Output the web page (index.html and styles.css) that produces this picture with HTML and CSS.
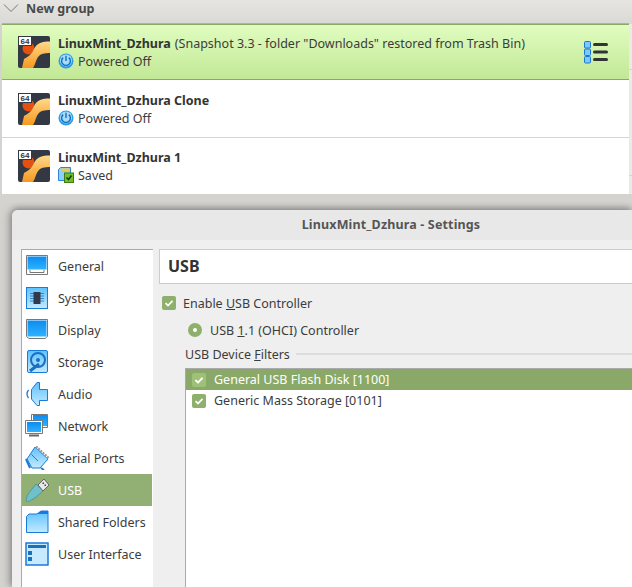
FILE: index.html
```html
<!DOCTYPE html>
<html lang="en">
<head>
<meta charset="utf-8">
<title>LinuxMint_Dzhura - Settings</title>
<link rel="stylesheet" href="styles.css">
</head>
<body>
<svg class="defs" aria-hidden="true">
  <defs>
    <linearGradient id="blue" x1="0" y1="0" x2="0" y2="1"><stop offset="0" stop-color="#0c8cf0"/><stop offset="1" stop-color="#2fb2ff"/></linearGradient>
    <linearGradient id="pale" x1="0" y1="0" x2="0" y2="1"><stop offset="0" stop-color="#5cc2ff"/><stop offset="1" stop-color="#c4eaff"/></linearGradient>
    <linearGradient id="orange" x1="0" y1="0" x2="0" y2="1"><stop offset="0" stop-color="#ffd98a"/><stop offset="1" stop-color="#f7981e"/></linearGradient>
    <symbol id="vm" viewBox="0 0 32 32">
      <rect width="32" height="32" rx="2" fill="#323844"/>
      <circle cx="10.500" cy="12.500" r="6" fill="#e3500f"/>
      <path d="M32 5.500C24 5.500 19 7 16 13C14 18 10 21 6 23L4 32H15C18 28 18 20 24 18C27 17 30 17 32 17Z" fill="url(#orange)"/>
      <rect x="0.500" y="0.500" width="13" height="9" fill="#fff" stroke="#323844"/>
      <text x="7" y="8" text-anchor="middle" class="bits">64</text>
    </symbol>
    <symbol id="power" viewBox="0 0 16 16">
      <circle cx="8" cy="8" r="7.500" fill="#2c9be8"/>
      <circle cx="8" cy="7.500" r="6" fill="#a9dcfb"/>
      <path d="M5.200 4.600A4.400 4.400 0 1 0 10.800 4.600" fill="none" stroke="#0f6fc0" stroke-width="1.400"/>
      <path d="M8 2.800V8" stroke="#0f6fc0" stroke-width="1.400"/>
    </symbol>
    <symbol id="check" viewBox="0 0 14 14">
      <rect width="14" height="14" rx="2" fill="#8fb06c"/>
      <path d="M3.500 7.200L6 9.500L10.500 4.800" fill="none" stroke="#fff" stroke-width="1.700"/>
    </symbol>
  </defs>
</svg>

<header class="group-head">
  <svg class="chevron" viewBox="0 0 16 10"><path d="M1 1.500L8 8.500L15 1.500" fill="none" stroke="#777" stroke-width="1"/></svg>
  <span class="group-name">New group</span>
</header>

<div class="vm-area">
  <section class="vm-list">
    <article class="vm vm-current">
      <svg class="vm-icon"><use href="#vm"/></svg>
      <div class="vm-text">
        <div class="vm-title"><b>LinuxMint_Dzhura</b><span class="snapshot">(Snapshot 3.3 - folder "Downloads" restored from Trash Bin)</span></div>
        <div class="vm-state"><svg class="state-icon"><use href="#power"/></svg>Powered Off</div>
      </div>
      <svg class="tools" viewBox="0 0 26 24">
        <g fill="#7cc8ff" stroke="#1877d0" stroke-width="1"><rect x="1.500" y="1.500" width="6" height="6.500" rx="1"/><rect x="1.500" y="9" width="6" height="6.500" rx="1"/><rect x="1.500" y="16.500" width="6" height="6.500" rx="1"/></g>
        <g fill="#333"><rect x="10" y="3" width="15" height="3" rx="1.500"/><rect x="10" y="10.500" width="15" height="3" rx="1.500"/><rect x="10" y="18" width="15" height="3" rx="1.500"/></g>
      </svg>
    </article>
    <article class="vm vm-middle">
      <svg class="vm-icon"><use href="#vm"/></svg>
      <div class="vm-text">
        <div class="vm-title"><b>LinuxMint_Dzhura Clone</b></div>
        <div class="vm-state"><svg class="state-icon"><use href="#power"/></svg>Powered Off</div>
      </div>
    </article>
    <article class="vm vm-last">
      <svg class="vm-icon"><use href="#vm"/></svg>
      <div class="vm-text">
        <div class="vm-title"><b>LinuxMint_Dzhura 1</b></div>
        <div class="vm-state">
          <svg class="state-icon" viewBox="0 0 16 16">
            <path d="M0.500 2.500L2.500 0.500H12.500V13.500H0.500Z" fill="#8fd0fa" stroke="#2a86d8"/>
            <path d="M3 1.500H11V4H3Z" fill="#f0c94a"/>
            <rect x="6.500" y="6" width="9" height="9.500" fill="#6cc02c" stroke="#3c7c12"/>
            <path d="M8.500 10.500L10.500 12.500L13.500 8.500" fill="none" stroke="#163c08" stroke-width="1.500"/>
          </svg>Saved</div>
      </div>
    </article>
  </section>
  <div class="vm-edge"></div>
</div>

<main class="dialog">
  <div class="dialog-title">LinuxMint_Dzhura - Settings</div>
  <div class="dialog-body">
    <nav class="side">
      <a class="side-item">
        <svg class="side-icon" viewBox="0 0 24 24"><path d="M1.500 1.500H22.500V20.500H1.500Z" fill="#fff" stroke="#777"/><rect x="2.500" y="2.500" width="19" height="13" fill="url(#blue)"/><path d="M5 16V18.500H19V16" fill="none" stroke="#777"/></svg>
        General</a>
      <a class="side-item">
        <svg class="side-icon" viewBox="0 0 24 24"><rect x="1.500" y="1.500" width="21" height="21" fill="url(#pale)" stroke="#1a7ad8"/><path d="M5 7.500H19M5 10H19M5 12.500H19M5 15H19" stroke="#1a6fc0" stroke-width="0.800"/><rect x="8.500" y="6" width="7" height="12" fill="#30384a"/></svg>
        System</a>
      <a class="side-item">
        <svg class="side-icon" viewBox="0 0 24 24"><path d="M1.500 1.500H22.500V18.500L20 20.500H4L1.500 18.500Z" fill="#fff" stroke="#777"/><rect x="2.500" y="2.500" width="19" height="16" fill="url(#blue)"/></svg>
        Display</a>
      <a class="side-item">
        <svg class="side-icon" viewBox="0 0 24 24"><rect x="2.500" y="0.500" width="20" height="22" rx="1.500" fill="url(#pale)" stroke="#1a7ad8"/><circle cx="13" cy="10" r="7" fill="none" stroke="#1a6fc0" stroke-width="2"/><circle cx="13" cy="10" r="2" fill="#1a6fc0"/><path d="M5 21L14 14" stroke="#1a6fc0" stroke-width="3"/></svg>
        Storage</a>
      <a class="side-item">
        <svg class="side-icon" viewBox="0 0 24 24"><path d="M6.500 7.500L12 0.500H14.500V7.500H22.500V18.500H14.500V23.500H12L6.500 17Z" fill="url(#pale)" stroke="#1a7ad8"/><path d="M3.500 8Q0.500 12 3.500 16" fill="none" stroke="#1a7ad8" stroke-width="1.300"/></svg>
        Audio</a>
      <a class="side-item">
        <svg class="side-icon" viewBox="0 0 24 24"><path d="M6.500 0.500H22.500V13.500H6.500Z" fill="#fff" stroke="#777"/><rect x="8" y="1" width="14" height="11" fill="url(#blue)"/><path d="M0.500 6.500H17.500V19.500H0.500Z" fill="#fff" stroke="#777"/><rect x="2" y="8" width="14" height="10" fill="url(#blue)"/><path d="M4 21.500H14" stroke="#666" stroke-width="2"/></svg>
        Network</a>
      <a class="side-item">
        <svg class="side-icon" viewBox="0 0 24 24"><path d="M10 1L23 13L15 22H7L2 13Z" fill="url(#pale)" stroke="#1a7ad8"/><path d="M11 0.500L23.500 12" stroke="#999" stroke-width="2.500" stroke-dasharray="2 1"/><path d="M6.500 8.500L13 15" stroke="#1a7ad8" stroke-width="1"/><path d="M1 13L5 22" stroke="#1a7ad8" stroke-width="2"/><path d="M16 22L19 24" stroke="#1a7ad8" stroke-width="2"/></svg>
        Serial Ports</a>
      <a class="side-item side-active">
        <svg class="side-icon" viewBox="0 0 24 24"><path d="M11 6L18 13L10 20Q5 23 2 24Q0 23 3 16Z" fill="#6fc0c8" stroke="#4e9a9e"/><path d="M13 7L19 1L24 7L18 13Z" fill="#e8e8e8" stroke="#666"/><rect x="17.500" y="4.500" width="1.500" height="1.500" fill="#444"/><rect x="19.500" y="6.500" width="1.500" height="1.500" fill="#444"/></svg>
        USB</a>
      <a class="side-item">
        <svg class="side-icon" viewBox="0 0 24 24"><path d="M1.500 22.500V6.500L4 4H12L16 1H23V22.500Z" fill="url(#pale)" stroke="#1a7ad8"/><path d="M12 4L16 1H23V4Z" fill="#1a7ad8"/></svg>
        Shared Folders</a>
      <a class="side-item">
        <svg class="side-icon" viewBox="0 0 24 24"><rect x="1" y="1" width="22" height="22" fill="#c8eaff" stroke="#1a7ad8" stroke-width="1.500"/><rect x="3" y="3" width="18" height="3" fill="#1a6fc0"/><rect x="3" y="9" width="4" height="4" fill="#1a6fc0"/><rect x="3" y="15" width="4" height="4" fill="#1a6fc0"/></svg>
        User Interface</a>
    </nav>
    <div class="panel">
      <h1 class="panel-title">USB</h1>
      <div class="option"><svg class="check"><use href="#check"/></svg><span>Enable <u>U</u>SB Controller</span></div>
      <div class="radio-row"><span class="radio"></span><span>USB <u>1</u>.1 (OHCI) Controller</span></div>
      <div class="filters-head"><span>USB Device <u>F</u>ilters</span><span class="rule"></span></div>
      <ul class="filters">
        <li class="filter filter-active"><svg class="check"><use href="#check"/></svg>General USB Flash Disk [1100]</li>
        <li class="filter"><svg class="check"><use href="#check"/></svg>Generic Mass Storage [0101]</li>
      </ul>
    </div>
  </div>
</main>
</body>
</html>
```
FILE: styles.css
```css
* { box-sizing: border-box; }
html, body { margin: 0; height: 587px; overflow: hidden; }
body {
  font-family: "Noto Sans", sans-serif;
  font-size: 12.5px;
  color: #3c3c3c;
  background: #d4d3cf;
  display: flex;
  flex-direction: column;
}
.defs { display: block; width: 0; height: 0; }
.bits { font: bold 8px "Liberation Sans", sans-serif; fill: #333; }

.group-head {
  height: 24px;
  display: flex;
  align-items: center;
  padding: 0 0 8px 3px;
  background: linear-gradient(#e6e5e2, #dad9d5);
  flex: none;
}
.chevron { width: 16px; height: 10px; margin-right: 7px; }
.group-name { font-weight: 700; color: #4a4a4a; }

.vm-area { display: flex; flex: none; padding-left: 2px; }
.vm-list { flex: 1; min-width: 0; background: #fff; }
.vm-edge {
  width: 3px;
  flex: none;
  background:
    linear-gradient(#d4d4d4, #d4d4d4) 0 45px / 3px 1px no-repeat,
    linear-gradient(#d4d4d4, #d4d4d4) 0 151px / 3px 1px no-repeat,
    #ebeae8;
}
.vm {
  height: 56px;
  display: flex;
  align-items: center;
  padding: 0 20px 0 16px;
}
.vm-current {
  background: linear-gradient(#e0fdc0, #c2e896);
  border: 1px solid #8aa868;
  border-width: 1px 0;
  box-shadow: 0 -1px 0 #a8b898;
}
.vm-middle { height: 58px; padding-top: 1px; border-bottom: 1px solid #d4d4d4; }
.vm-icon { width: 32px; height: 32px; flex: none; margin-right: 8px; }
.vm-text { flex: 1; display: flex; flex-direction: column; gap: 1px; }
.vm-title { line-height: 17px; }
.vm-title b { color: #333; }
.snapshot { margin-left: 4px; }
.vm-state { display: flex; align-items: center; line-height: 17px; }
.state-icon { width: 16px; height: 16px; margin-right: 4px; }
.tools { width: 26px; height: 24px; flex: none; }

.dialog {
  margin: 16px 0 0 12px;
  flex: 1;
  min-height: 0;
  display: flex;
  flex-direction: column;
  background: #efefef;
  border-radius: 6px 0 0 0;
  box-shadow: 0 -2px 6px rgba(0,0,0,.28), -3px 0 8px rgba(0,0,0,.22);
}
.dialog-title {
  height: 30px;
  flex: none;
  background: #e8e8e8;
  border-radius: 6px 0 0 0;
  display: flex;
  align-items: center;
  justify-content: center;
  font-weight: 700;
  letter-spacing: .15px;
  color: #555;
  padding: 0 0 1px 138px;
}
.dialog-body {
  flex: 1;
  min-height: 0;
  display: flex;
  padding: 9px 0 0 9px;
  gap: 6px;
}
.side {
  width: 132px;
  flex: none;
  background: #fff;
  border: 1px solid #aaa;
  border-width: 1px 0 0 1px;
  display: flex;
  flex-direction: column;
}
.side-item {
  height: 32px;
  flex: none;
  display: flex;
  align-items: center;
  padding-left: 3px;
  gap: 9px;
}
.side-active { background: #93b074; color: #fff; margin-right: 1px; }
.side-icon { width: 24px; height: 24px; flex: none; }

.panel { flex: 1; min-width: 0; display: flex; flex-direction: column; }
.panel-title {
  margin: 0;
  height: 35px;
  flex: none;
  background: #fff;
  border: 1px solid #ccc;
  border-right: 0;
  display: flex;
  align-items: center;
  padding: 0 0 2px 8px;
  font-size: 16px;
  font-weight: 700;
  color: #333;
}
.option {
  height: 16px;
  margin: 11px 0 0 3px;
  display: flex;
  align-items: center;
  gap: 7px;
}
.check { width: 14px; height: 14px; flex: none; }
.radio-row {
  height: 16px;
  margin: 11px 0 0 29px;
  display: flex;
  align-items: center;
  gap: 8px;
}
.radio {
  width: 14px;
  height: 14px;
  border-radius: 50%;
  background: #8fb06c;
  display: flex;
  align-items: center;
  justify-content: center;
}
.radio::after {
  content: "";
  width: 4px;
  height: 4px;
  border-radius: 50%;
  background: #fff;
}
.filters-head {
  height: 16px;
  margin: 8px 0 0 26px;
  display: flex;
  align-items: center;
  gap: 6px;
}
.rule { flex: 1; height: 2px; background: #dcdcdc; }
.filters {
  list-style: none;
  margin: 6px 0 0 26px;
  padding: 0;
  flex: 1;
  background: #fff;
  border: 1px solid #aaa;
  border-width: 1px 0 0 1px;
}
.filter {
  height: 21px;
  display: flex;
  align-items: center;
  padding-left: 6px;
  gap: 8px;
}
.filter-active { background: #8aa868; color: #fff; }
.filter-active .check { filter: brightness(1.1); }
```
